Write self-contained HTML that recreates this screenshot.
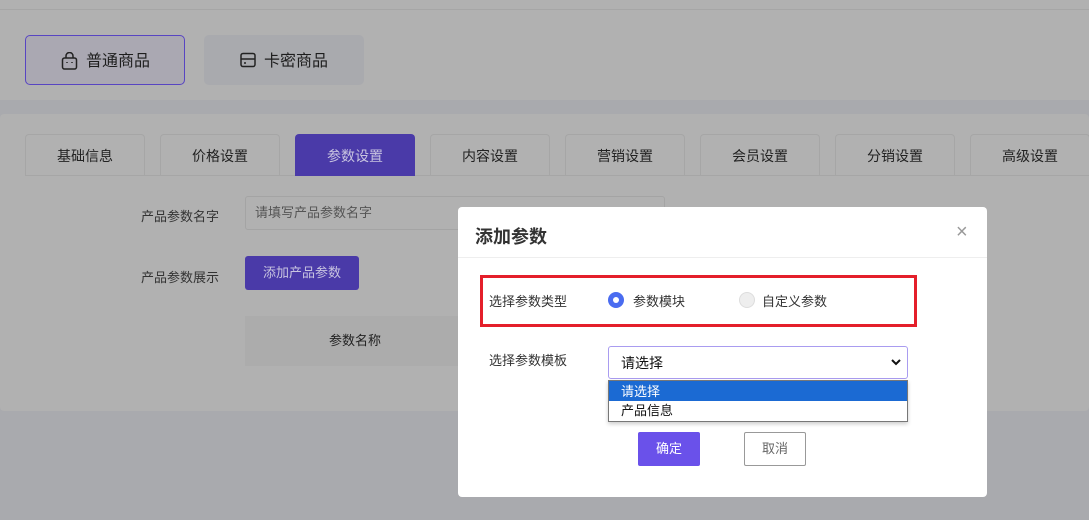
<!DOCTYPE html>
<html><head><meta charset="utf-8"><style>
*{margin:0;padding:0;box-sizing:border-box}
body{width:1089px;height:520px;overflow:hidden;background:#a9aaae;font-family:"Liberation Sans","Noto Sans CJK SC",sans-serif;position:relative;color:#333}
.a{position:absolute}
.tab{position:absolute;top:134px;width:120px;height:42px;border:1px solid #a6a6a6;border-bottom:none;border-radius:4px 4px 0 0;text-align:center;line-height:42px;font-size:14px;color:#222}
</style></head><body>
<div class="a" style="left:0;top:0;width:1089px;height:100px;background:#b1b1b1"></div>
<div class="a" style="left:0;top:9px;width:1089px;height:1px;background:#a6a6a6"></div>
<div class="a" style="left:25px;top:35px;width:160px;height:50px;border:1px solid #5845c2;border-radius:5px;background:#aaa8b2;font-size:16px;line-height:52px;color:#1e1e1e">
<svg class="a" style="left:35px;top:16px" width="17" height="18" viewBox="0 0 17 18" fill="none" stroke="#222" stroke-width="1.5"><path d="M5 6V4a3.5 3.5 0 0 1 7 0v2"/><rect x="1.5" y="6" width="14" height="11" rx="2"/><path d="M6 10v1M11 10v1"/></svg>
<span class="a" style="left:60px;top:0">普通商品</span></div>
<div class="a" style="left:204px;top:35px;width:160px;height:50px;border-radius:5px;background:#a9aaae;font-size:16px;line-height:54px;color:#1e1e1e">
<svg class="a" style="left:36px;top:17px" width="17" height="17" viewBox="0 0 17 17" fill="none" stroke="#222" stroke-width="1.5"><rect x="1" y="1.5" width="14" height="13" rx="2"/><path d="M1 7h14M4 11h2"/></svg>
<span class="a" style="left:60px;top:0">卡密商品</span></div>
<div class="a" style="left:0;top:114px;width:1089px;height:297px;background:#b1b1b1;border-radius:4px"></div>
<div class="a" style="left:25px;top:175px;width:1064px;height:1px;background:#a6a6a6"></div>
<div class="tab" style="left:25px">基础信息</div>
<div class="tab" style="left:160px">价格设置</div>
<div class="tab" style="left:295px;background:#4a3aa8;border-color:#4a3aa8;color:#c8c4e0">参数设置</div>
<div class="tab" style="left:430px">内容设置</div>
<div class="tab" style="left:565px">营销设置</div>
<div class="tab" style="left:700px">会员设置</div>
<div class="tab" style="left:835px">分销设置</div>
<div class="tab" style="left:970px">高级设置</div>
<div class="a" style="left:141px;top:206px;font-size:13px;color:#333">产品参数名字</div>
<div class="a" style="left:245px;top:196px;width:420px;height:34px;border:1px solid #a4a4a4;border-radius:3px;font-size:13px;line-height:32px;padding-left:9px;color:#555">请填写产品参数名字</div>
<div class="a" style="left:141px;top:267px;font-size:13px;color:#333">产品参数展示</div>
<div class="a" style="left:245px;top:256px;width:114px;height:34px;background:#4a3aa8;border-radius:3px;font-size:13px;line-height:34px;text-align:center;color:#c8c4e0">添加产品参数</div>
<div class="a" style="left:245px;top:316px;width:220px;height:50px;background:#acacac;font-size:13px;line-height:50px;text-align:center;color:#222">参数名称</div>
<div class="a" style="left:458px;top:207px;width:529px;height:290px;background:#fff;border-radius:4px">
<div class="a" style="left:17px;top:16px;font-size:18px;font-weight:bold;color:#333">添加参数</div>
<div class="a" style="left:498px;top:14px;font-size:20px;color:#999">×</div>
<div class="a" style="left:0;top:50px;width:529px;height:1px;background:#eee"></div>
<div class="a" style="left:22px;top:68px;width:437px;height:52px;border:3px solid #e41f2a"></div>
<div class="a" style="left:31px;top:84px;font-size:13px">选择参数类型</div>
<div class="a" style="left:150px;top:85px;width:16px;height:16px;border-radius:50%;background:#4a6cf0"><div class="a" style="left:5px;top:5px;width:6px;height:6px;border-radius:50%;background:#fff"></div></div>
<div class="a" style="left:175px;top:84px;font-size:13px">参数模块</div>
<div class="a" style="left:281px;top:85px;width:16px;height:16px;border-radius:50%;background:#eee;border:1px solid #ddd"></div>
<div class="a" style="left:304px;top:84px;font-size:13px">自定义参数</div>
<div class="a" style="left:31px;top:143px;font-size:13px">选择参数模板</div>
<div class="a" style="left:150px;top:139px;width:300px;height:33px;border:1px solid #a99cf0;border-radius:3px;font-size:14px;line-height:33px;padding-left:12px;color:#111">请选择
<svg class="a" style="right:6px;top:12px" width="10" height="7" viewBox="0 0 10 7"><path d="M1 1l4 4 4-4" stroke="#111" stroke-width="2" fill="none"/></svg></div>
<div class="a" style="left:150px;top:173px;width:300px;height:42px;border:1px solid #777;background:#fff;box-shadow:0 2px 4px rgba(0,0,0,.2);font-size:13px">
<div style="height:20px;background:#1b6ad3;color:#fff;padding-left:12px;line-height:21px">请选择</div>
<div style="padding-left:12px;line-height:20px;color:#111">产品信息</div></div>
<div class="a" style="left:180px;top:225px;width:62px;height:34px;background:#6a51ea;border-radius:2px;color:#fff;font-size:13px;line-height:34px;text-align:center">确定</div>
<div class="a" style="left:286px;top:225px;width:62px;height:34px;border:1px solid #999;border-radius:2px;color:#666;font-size:13px;line-height:32px;text-align:center">取消</div>
</div>
</body></html>
